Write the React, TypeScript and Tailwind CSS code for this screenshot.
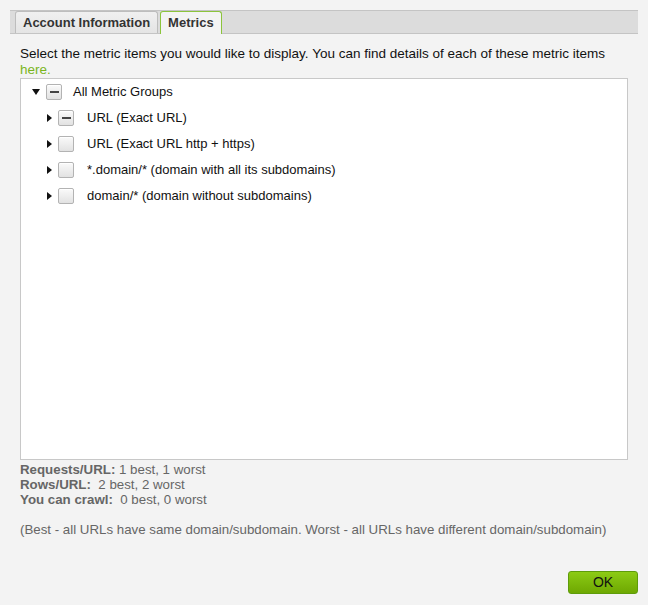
import React from "react";

const groups = [
  { label: "URL (Exact URL)", partial: true },
  { label: "URL (Exact URL http + https)", partial: false },
  { label: "*.domain/* (domain with all its subdomains)", partial: false },
  { label: "domain/* (domain without subdomains)", partial: false },
];

function Checkbox({ partial }: { partial?: boolean }) {
  return (
    <span className="flex h-[16px] w-[16px] shrink-0 items-center justify-center rounded-[2px] border border-[#b3b3b3] bg-gradient-to-b from-[#fafafa] to-[#e2e2e2] shadow-[inset_0_1px_0_#fff]">
      {partial && <span className="h-[2px] w-[9px] bg-[#444]" />}
    </span>
  );
}

function CaretDown() {
  return (
    <svg width="8" height="6" viewBox="0 0 8 6" className="shrink-0">
      <path d="M0 0 H8 L4 6 Z" fill="#111" />
    </svg>
  );
}

function CaretRight() {
  return (
    <svg width="5" height="8" viewBox="0 0 5 8" className="shrink-0">
      <path d="M0 0 L5 4 L0 8 Z" fill="#111" />
    </svg>
  );
}

export default function App() {
  return (
    <div
      className="h-[605px] w-[648px] bg-[#f3f3f3] px-[10px] pt-[10px] text-[13px] text-[#111]"
      style={{ fontFamily: '"Liberation Sans", Arial, Helvetica, sans-serif' }}
    >
      {/* Tabs */}
      <div className="flex h-[24px] items-end border-t border-b border-[#c4c4c4] bg-[#dcdcdc] pl-[5px]">
        <div className="flex h-[22px] items-center rounded-t-[3px] border border-b-0 border-[#bdbdbd] bg-gradient-to-b from-[#f0f0f0] to-[#e4e4e4] px-[7px] text-[13px] font-bold text-[#333]">
          Account Information
        </div>
        <div className="-mb-px ml-[2px] flex h-[23px] items-center rounded-t-[3px] border border-b-0 border-[#8cc43c] bg-[#f3f3f3] px-[7px] text-[13px] font-bold text-[#333]">
          Metrics
        </div>
      </div>

      <div className="px-[10px]">
        <p className="mt-[12px] text-[13.5px] leading-[16px]">
          Select the metric items you would like to display. You can find details of each of these metric items{" "}
          <span className="text-[#7ab51d]">here.</span>
        </p>

        {/* Tree */}
        <div className="h-[382px] border border-[#c8c8c8] bg-white">
          <div className="flex h-[26px] items-center pl-[11px]">
            <span className="flex w-[14px] items-center">
              <CaretDown />
            </span>
            <Checkbox partial />
            <span className="ml-[11px]">All Metric Groups</span>
          </div>
          {groups.map((g) => (
            <div key={g.label} className="flex h-[26px] items-center pl-[26px]">
              <span className="flex w-[11px] items-center">
                <CaretRight />
              </span>
              <Checkbox partial={g.partial} />
              <span className="ml-[13px]">{g.label}</span>
            </div>
          ))}
        </div>

        {/* Summary */}
        <div className="mt-[2px] text-[13.3px] leading-[15px] text-[#666]">
          <div>
            <span className="font-bold">Requests/URL:</span> 1 best, 1 worst
          </div>
          <div className="whitespace-pre">
            <span className="font-bold">Rows/URL:</span>  2 best, 2 worst
          </div>
          <div className="whitespace-pre">
            <span className="font-bold">You can crawl:</span>  0 best, 0 worst
          </div>
          <div className="mt-[15px]">
            (Best - all URLs have same domain/subdomain. Worst - all URLs have different domain/subdomain)
          </div>
        </div>
      </div>

      <div className="mt-[34px] flex justify-end">
        <button className="flex h-[23px] w-[70px] items-center justify-center rounded-[3px] border border-[#5e9c0a] bg-gradient-to-b from-[#8ccb14] to-[#6ea802] text-[14px] text-[#111]">
          OK
        </button>
      </div>
    </div>
  );
}
